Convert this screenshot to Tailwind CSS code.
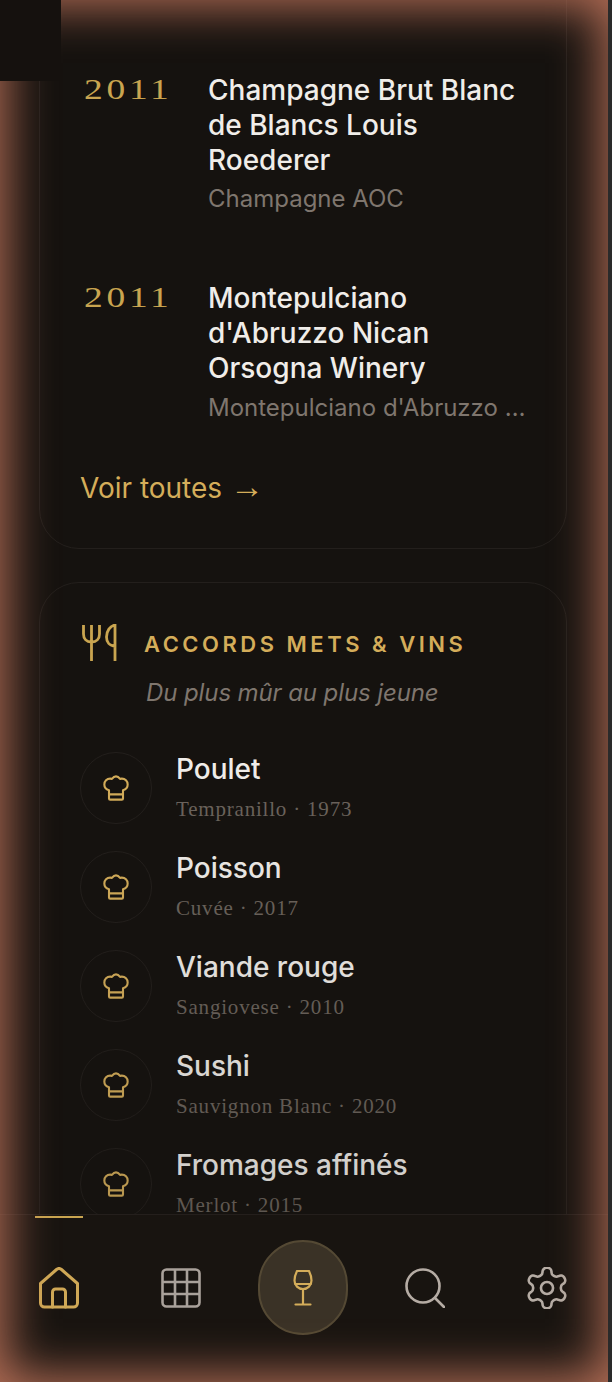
<!DOCTYPE html>
<html lang="fr">

<head>
    <meta charset="UTF-8">
    <meta name="viewport" content="width=device-width, initial-scale=1.0">
    <script src="https://cdn.jsdelivr.net/npm/@tailwindcss/browser@4"></script>
    <title>Cave</title>
</head>

<body class="bg-[#2a2a2a]">
    <div class="relative w-[608px] h-[1382px] overflow-hidden bg-[#15120f] font-['Inter',sans-serif]">

        <!-- Dernieres bouteilles -->
        <section class="ml-[39px] mr-[41px] mt-[-60px] h-[609px] rounded-[40px] border border-[#231f1c] px-[40px] pt-[132px]">
            <div class="flex">
                <div class="w-[128px] shrink-0 pl-[4px]">
                    <span class="inline-block origin-left scale-x-[1.25] font-['Liberation_Serif',serif] text-[30px] leading-[32px] tracking-[3px] text-[#c9a550]">2011</span>
                </div>
                <div class="min-w-0 flex-1">
                    <p class="text-[28px] leading-[35px] font-[450] text-[#f0ede9]">Champagne Brut Blanc de Blancs Louis Roederer</p>
                    <p class="mt-[5px] truncate text-[24px] leading-[32px] text-[#7f766e]">Champagne AOC</p>
                </div>
            </div>
            <div class="mt-[66px] flex">
                <div class="w-[128px] shrink-0 pl-[4px]">
                    <span class="inline-block origin-left scale-x-[1.25] font-['Liberation_Serif',serif] text-[30px] leading-[32px] tracking-[3px] text-[#c9a550]">2011</span>
                </div>
                <div class="min-w-0 flex-1">
                    <p class="text-[28px] leading-[35px] font-[450] text-[#f0ede9]">Montepulciano d'Abruzzo Nican Orsogna Winery</p>
                    <p class="mt-[6px] truncate text-[24px] leading-[32px] text-[#7f766e]">Montepulciano d'Abruzzo Nican Orsogna</p>
                </div>
            </div>
            <a class="mt-[46px] block text-[28px] leading-[36px] text-[#d4ad5a]">Voir toutes <span class="font-['Liberation_Serif',serif] text-[34px] leading-none">→</span></a>
        </section>

        <!-- Accords mets et vins -->
        <section class="ml-[39px] mr-[41px] mt-[33px] h-[800px] rounded-[40px] border border-[#231f1c] px-[40px] pt-[41px]">
            <div class="flex items-center">
                <svg class="ml-[2px] w-[36px] h-[38px] shrink-0" viewBox="0 0 36 38" fill="none" stroke="#c9a550" stroke-width="2.800">
                    <path d="M1.500 1v9c0 5 3 8 8 8s8-3 8-8V1M9.500 1v36" />
                    <path d="M33 37V1c-5 1-8.500 6-8.500 12 0 5 3 9 8.500 9" />
                </svg>
                <h2 class="ml-[26px] pt-[2px] text-[22px] leading-[30px] font-semibold tracking-[3.500px] text-[#d4ad5a]">ACCORDS METS &amp; VINS</h2>
            </div>
            <p class="mt-[15px] pl-[66px] text-[24px] leading-[32px] tracking-[-0.1px] italic text-[#7f766e]">Du plus mûr au plus jeune</p>

            <div class="mt-[43px] flex flex-col gap-[27px]">
                <div class="flex items-center">
                    <span class="flex size-[72px] shrink-0 items-center justify-center rounded-full border border-[#231f1c]">
                        <svg class="size-[28px]" viewBox="0 0 24 24" fill="none" stroke="#d4ad5a" stroke-width="1.800" stroke-linecap="round" stroke-linejoin="round"><path d="M6 14c-2.500-.8-4-2.700-4-5 0-2.800 2.200-5 5-5 .5 0 1 .1 1.500.2C9.400 3 10.600 2 12 2s2.600 1 3.500 2.200c.5-.1 1-.2 1.500-.2 2.800 0 5 2.200 5 5 0 2.300-1.500 4.200-4 5v7a1 1 0 0 1-1 1H7a1 1 0 0 1-1-1zM6 17.500h12" /></svg>
                    </span>
                    <div class="ml-[24px] -mt-[3px]">
                        <p class="text-[28px] leading-[36px] font-[450] text-[#f0ede9]">Poulet</p>
                        <p class="mt-[8px] font-['Liberation_Serif',serif] text-[21px] leading-[28px] tracking-[0.8px] text-[#6b635c]">Tempranillo · 1973</p>
                    </div>
                </div>
                <div class="flex items-center">
                    <span class="flex size-[72px] shrink-0 items-center justify-center rounded-full border border-[#231f1c]">
                        <svg class="size-[28px]" viewBox="0 0 24 24" fill="none" stroke="#d4ad5a" stroke-width="1.800" stroke-linecap="round" stroke-linejoin="round"><path d="M6 14c-2.500-.8-4-2.700-4-5 0-2.800 2.200-5 5-5 .5 0 1 .1 1.500.2C9.400 3 10.600 2 12 2s2.600 1 3.500 2.200c.5-.1 1-.2 1.500-.2 2.800 0 5 2.200 5 5 0 2.300-1.500 4.200-4 5v7a1 1 0 0 1-1 1H7a1 1 0 0 1-1-1zM6 17.500h12" /></svg>
                    </span>
                    <div class="ml-[24px] -mt-[3px]">
                        <p class="text-[28px] leading-[36px] font-[450] text-[#f0ede9]">Poisson</p>
                        <p class="mt-[8px] font-['Liberation_Serif',serif] text-[21px] leading-[28px] tracking-[0.8px] text-[#6b635c]">Cuvée · 2017</p>
                    </div>
                </div>
                <div class="flex items-center">
                    <span class="flex size-[72px] shrink-0 items-center justify-center rounded-full border border-[#231f1c]">
                        <svg class="size-[28px]" viewBox="0 0 24 24" fill="none" stroke="#d4ad5a" stroke-width="1.800" stroke-linecap="round" stroke-linejoin="round"><path d="M6 14c-2.500-.8-4-2.700-4-5 0-2.800 2.200-5 5-5 .5 0 1 .1 1.500.2C9.400 3 10.600 2 12 2s2.600 1 3.500 2.200c.5-.1 1-.2 1.500-.2 2.800 0 5 2.200 5 5 0 2.300-1.500 4.200-4 5v7a1 1 0 0 1-1 1H7a1 1 0 0 1-1-1zM6 17.500h12" /></svg>
                    </span>
                    <div class="ml-[24px] -mt-[3px]">
                        <p class="text-[28px] leading-[36px] font-[450] text-[#f0ede9]">Viande rouge</p>
                        <p class="mt-[8px] font-['Liberation_Serif',serif] text-[21px] leading-[28px] tracking-[0.8px] text-[#6b635c]">Sangiovese · 2010</p>
                    </div>
                </div>
                <div class="flex items-center">
                    <span class="flex size-[72px] shrink-0 items-center justify-center rounded-full border border-[#231f1c]">
                        <svg class="size-[28px]" viewBox="0 0 24 24" fill="none" stroke="#d4ad5a" stroke-width="1.800" stroke-linecap="round" stroke-linejoin="round"><path d="M6 14c-2.500-.8-4-2.700-4-5 0-2.800 2.200-5 5-5 .5 0 1 .1 1.500.2C9.400 3 10.600 2 12 2s2.600 1 3.500 2.200c.5-.1 1-.2 1.500-.2 2.800 0 5 2.200 5 5 0 2.300-1.500 4.200-4 5v7a1 1 0 0 1-1 1H7a1 1 0 0 1-1-1zM6 17.500h12" /></svg>
                    </span>
                    <div class="ml-[24px] -mt-[3px]">
                        <p class="text-[28px] leading-[36px] font-[450] text-[#f0ede9]">Sushi</p>
                        <p class="mt-[8px] font-['Liberation_Serif',serif] text-[21px] leading-[28px] tracking-[0.8px] text-[#6b635c]">Sauvignon Blanc · 2020</p>
                    </div>
                </div>
                <div class="flex items-center">
                    <span class="flex size-[72px] shrink-0 items-center justify-center rounded-full border border-[#231f1c]">
                        <svg class="size-[28px]" viewBox="0 0 24 24" fill="none" stroke="#d4ad5a" stroke-width="1.800" stroke-linecap="round" stroke-linejoin="round"><path d="M6 14c-2.500-.8-4-2.700-4-5 0-2.800 2.200-5 5-5 .5 0 1 .1 1.500.2C9.400 3 10.600 2 12 2s2.600 1 3.500 2.200c.5-.1 1-.2 1.500-.2 2.800 0 5 2.200 5 5 0 2.300-1.500 4.200-4 5v7a1 1 0 0 1-1 1H7a1 1 0 0 1-1-1zM6 17.500h12" /></svg>
                    </span>
                    <div class="ml-[24px] -mt-[3px]">
                        <p class="text-[28px] leading-[36px] font-[450] text-[#f0ede9]">Fromages affinés</p>
                        <p class="mt-[8px] font-['Liberation_Serif',serif] text-[21px] leading-[28px] tracking-[0.8px] text-[#6b635c]">Merlot · 2015</p>
                    </div>
                </div>
            </div>
        </section>

        <!-- Fondu au-dessus de la barre -->
        <div class="pointer-events-none absolute inset-x-0 bottom-[168px] h-[460px] bg-gradient-to-b from-transparent to-[#15120f]/15"></div>

        <!-- Barre de navigation -->
        <nav class="absolute inset-x-0 bottom-0 h-[168px] border-t border-[#241f1c] bg-[#181410] pt-[25px]">
            <span class="absolute left-[35px] top-[1px] h-[2px] w-[48px] bg-[#c9a550]"></span>
            <div class="ml-[-2px] grid w-[610px] grid-cols-5 items-center justify-items-center">
                <svg class="w-[40px] h-[42px]" viewBox="0 0 40 42" fill="none" stroke="#cfa856" stroke-width="3" stroke-linecap="round" stroke-linejoin="round"><path d="M1.500 16.500 17.500 2.500a4 4 0 0 1 5 0l16 14V36a4 4 0 0 1-4 4H5.500a4 4 0 0 1-4-4z" /><path d="M13.500 40V25a3 3 0 0 1 3-3h7a3 3 0 0 1 3 3v15" /></svg>
                <svg class="size-[40px]" viewBox="0 0 40 40" fill="none" stroke="#a9a19a" stroke-width="2.600"><rect x="1.500" y="1.500" width="37" height="37" rx="4" /><path d="M14 1.500v37M26 1.500v37M1.500 14h37M1.500 26h37" /></svg>
                <span class="flex h-[95px] w-[90px] items-center justify-center rounded-full border-2 border-[#544934] bg-[#3a3226]">
                    <svg class="h-[36px] w-[20px]" viewBox="0 0 20 36" fill="none" stroke="#d4ad5a" stroke-width="2.200" stroke-linecap="round" stroke-linejoin="round"><path d="M4 1h12c1.500 3 2.500 6 2.500 9.500 0 5-3.800 8.500-8.500 8.500s-8.500-3.500-8.500-8.500C1.500 7 2.500 4 4 1zM2 14h16M10 19v15.500M2.500 34.500h15" /></svg>
                </span>
                <svg class="size-[40px]" viewBox="0 0 40 40" fill="none" stroke="#b5aca4" stroke-width="2.600" stroke-linecap="round"><circle cx="18" cy="18" r="16.500" /><path d="M30 30l9 9" /></svg>
                <svg class="w-[40px] h-[42px]" viewBox="2.400 1.600 19.200 20.800" fill="none" stroke="#b5aca4" stroke-width="1.300" stroke-linecap="round" stroke-linejoin="round"><path d="M12.220 2h-.44a2 2 0 0 0-2 2v.18a2 2 0 0 1-1 1.730l-.43.250a2 2 0 0 1-2 0l-.15-.08a2 2 0 0 0-2.730.73l-.22.380a2 2 0 0 0 .73 2.730l.15.100a2 2 0 0 1 1 1.720v.510a2 2 0 0 1-1 1.740l-.15.090a2 2 0 0 0-.73 2.730l.22.380a2 2 0 0 0 2.730.730l.15-.08a2 2 0 0 1 2 0l.43.250a2 2 0 0 1 1 1.730V20a2 2 0 0 0 2 2h.44a2 2 0 0 0 2-2v-.18a2 2 0 0 1 1-1.730l.43-.250a2 2 0 0 1 2 0l.15.080a2 2 0 0 0 2.730-.730l.22-.390a2 2 0 0 0-.73-2.730l-.15-.080a2 2 0 0 1-1-1.740v-.500a2 2 0 0 1 1-1.740l.15-.090a2 2 0 0 0 .73-2.730l-.22-.380a2 2 0 0 0-2.730-.730l-.15.080a2 2 0 0 1-2 0l-.43-.250a2 2 0 0 1-1-1.730V4a2 2 0 0 0-2-2z" /><circle cx="12" cy="12" r="3" /></svg>
            </div>
        </nav>

        <!-- Carre en haut a gauche -->
        <div class="absolute left-0 top-0 z-20 h-[81px] w-[61px] bg-[#15110e]"></div>

        <!-- Vignette -->
        <div class="pointer-events-none absolute inset-0 z-10 shadow-[inset_0_0_48px_6px_#b87058]"></div>
    </div>
</body>

</html>
